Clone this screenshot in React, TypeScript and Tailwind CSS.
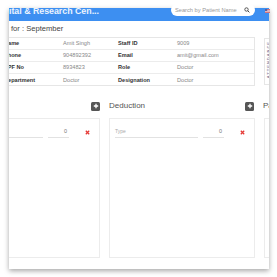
import React from "react";

const rows = [
  ["Name", "Amit Singh", "Staff ID", "9009"],
  ["Phone", "904892392", "Email", "amit@gmail.com"],
  ["PPF No", "8934823", "Role", "Doctor"],
  ["Department", "Doctor", "Designation", "Doctor"],
];

function PlusButton() {
  return (
    <div className="w-[9px] h-[9px] rounded-[1.5px] bg-[#555] flex items-center justify-center">
      <svg width="6" height="6" viewBox="0 0 6 6">
        <path d="M3 0.8V5.2M0.8 3H5.2" stroke="#fff" strokeWidth="1.3" />
      </svg>
    </div>
  );
}

function RemoveMark() {
  return (
    <svg width="5" height="5" viewBox="0 0 5 5" className="shrink-0">
      <path d="M0.8 0.8L4.2 4.2M4.2 0.8L0.8 4.2" stroke="#e53935" strokeWidth="1.3" />
    </svg>
  );
}

function EntryRow({ placeholder }: { placeholder: string }) {
  return (
    <div className="flex items-end h-[12px]">
      <div className="flex-1 border-b border-[#e2e2e2] h-[10px] text-[5px] leading-[7px] text-[#aaa]">
        {placeholder}
      </div>
      <div className="ml-[5px] w-[21px] border-b border-[#e2e2e2] h-[10px] text-[5.5px] leading-[7px] text-[#777] text-right pr-[2px]">
        0
      </div>
      <div className="ml-[16px] mr-[9px] mb-[3px]">
        <RemoveMark />
      </div>
    </div>
  );
}

export default function App() {
  return (
    <div
      className="w-[277px] h-[277px] bg-white overflow-hidden pl-[9px] pt-[8px]"
      style={{ fontFamily: '"Liberation Sans", Arial, sans-serif' }}
    >
      <div className="w-[260px] h-[261px] bg-white shadow-[0_2px_5px_rgba(0,0,0,0.35)] flex flex-col relative">
        {/* header bar */}
        <div className="h-[13px] bg-[#3d8ff1] relative shrink-0">
          <div className="h-full overflow-hidden">
            <div className="text-[8.8px] font-bold text-white/90 leading-[9px] mt-[-1px] whitespace-nowrap">
              ital &amp; Research Cen...
            </div>
          </div>
          <div className="absolute left-[162px] top-[-4px] w-[84px] h-[12px] rounded-full bg-white flex items-center pl-[4px] pr-[5px]">
            <span className="text-[5.7px] text-[#999] whitespace-nowrap flex-1">Search by Patient Name</span>
            <svg width="6" height="6" viewBox="0 0 6 6">
              <circle cx="2.5" cy="2.5" r="1.7" fill="none" stroke="#444" strokeWidth="0.9" />
              <path d="M3.8 3.8L5.4 5.4" stroke="#444" strokeWidth="1" />
            </svg>
          </div>
          <svg width="5" height="4" viewBox="0 0 5 4" className="absolute right-[-1px] top-[1px]">
            <rect width="5" height="4" fill="#f4f4f8" />
            <rect y="0" width="5" height="0.8" fill="#c9565f" />
            <rect y="1.6" width="5" height="0.8" fill="#c9565f" />
            <rect y="3.2" width="5" height="0.8" fill="#c9565f" />
            <rect width="2.2" height="2" fill="#5a5f9a" />
          </svg>
        </div>

        {/* page body, scrolled so its left part sits out of view */}
        <div className="flex-1 overflow-hidden">
          <div className="ml-[-55px] w-[456px]">
            <div className="h-[16px] pl-[57px] flex items-center text-[7.6px] text-[#444] whitespace-nowrap">
              for : September
            </div>

            <div className="grid grid-cols-[146px_146px_146px] gap-x-[9px]">
              <div className="col-span-2 border border-[#e6e6e6] h-[49px]">
                {rows.map((r, i) => (
                  <div
                    key={r[0]}
                    className={`h-[12px] grid grid-cols-[59px_55px_59px_1fr] pl-[49px] items-center text-[5.6px] whitespace-nowrap ${
                      i < rows.length - 1 ? "border-b border-[#ececec]" : ""
                    }`}
                  >
                    <span className="font-semibold text-[#333]">{r[0]}</span>
                    <span className="text-[#888]">{r[1]}</span>
                    <span className="font-semibold text-[#333]">{r[2]}</span>
                    <span className="text-[#888]">{r[3]}</span>
                  </div>
                ))}
              </div>
              <div className="border border-[#e6e6e6] h-[47px] mt-[1px] pl-[2px] pt-[2px] overflow-hidden">
                <div className="text-[4px] leading-[4.2px] text-[#8a80a0] font-bold [writing-mode:vertical-rl] rotate-180 tracking-[1px]">
                  ATTENDANCE
                </div>
              </div>
            </div>

            {/* column titles */}
            <div className="grid grid-cols-[146px_146px_146px] gap-x-[9px] mt-[14px] h-[12px] items-center">
              <div className="flex items-center justify-between">
                <span className="text-[8px] text-[#555]">Earning</span>
                <PlusButton />
              </div>
              <div className="flex items-center justify-between pr-[1px]">
                <span className="text-[8px] text-[#555]">Deduction</span>
                <PlusButton />
              </div>
              <div className="flex items-center">
                <span className="text-[8px] text-[#555] ml-[-1px]">Payment</span>
              </div>
            </div>

            {/* column cards */}
            <div className="grid grid-cols-[146px_146px_146px] gap-x-[9px] mt-[6px]">
              <div className="h-[140px] border border-[#ececec] pl-[5px] pt-[7px]">
                <EntryRow placeholder="Type" />
              </div>
              <div className="h-[140px] border border-[#ececec] pl-[5px] pt-[7px]">
                <EntryRow placeholder="Type" />
              </div>
              <div className="h-[140px] border border-[#ececec]" />
            </div>
          </div>
        </div>
      </div>
    </div>
  );
}
